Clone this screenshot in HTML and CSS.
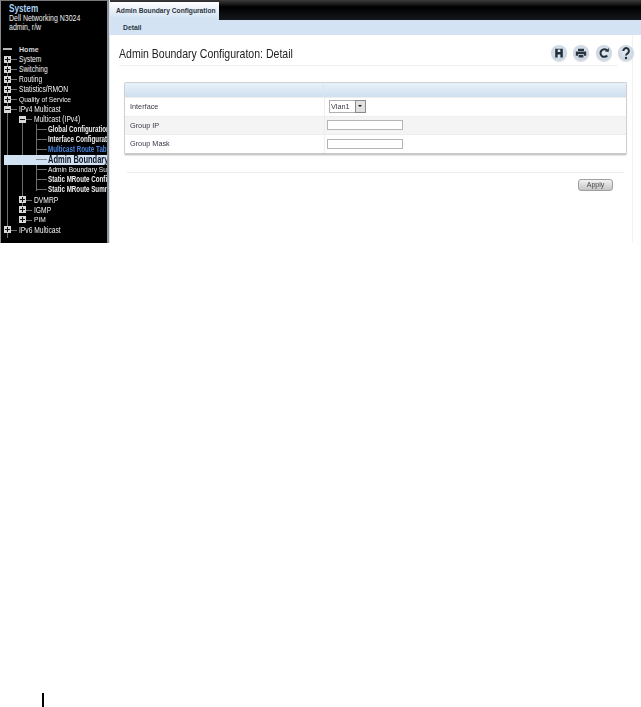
FILE: index.html
```html
<!DOCTYPE html>
<html lang="en">
<head>
<meta charset="utf-8">
<title>Admin Boundary Configuration</title>
<link rel="stylesheet" href="styles.css">
</head>
<body>
<div class="frame">
  <aside class="side">
    <div class="sys">
      <div class="sys-name">System</div>
      <div class="sys-line">Dell Networking N3024</div>
      <div class="sys-line">admin, r/w</div>
    </div>
    <div class="tree">
      <span class="vline v1"></span><span class="vline v2"></span><span class="vline v3"></span>
      <div class="row l0 home"><span class="dash"></span><span class="lbl">Home</span></div>
      <div class="row l0"><span class="box plus"></span><span class="lbl">System</span></div>
      <div class="row l0"><span class="box plus"></span><span class="lbl">Switching</span></div>
      <div class="row l0"><span class="box plus"></span><span class="lbl">Routing</span></div>
      <div class="row l0"><span class="box plus"></span><span class="lbl">Statistics/RMON</span></div>
      <div class="row l0 small"><span class="box plus"></span><span class="lbl">Quality of Service</span></div>
      <div class="row l0"><span class="box minus"></span><span class="lbl">IPv4 Multicast</span></div>
      <div class="row l1"><span class="box minus"></span><span class="lbl">Multicast (IPv4)</span></div>
      <div class="row l2 strong"><span class="tick"></span><span class="lbl">Global Configuration</span></div>
      <div class="row l2 strong"><span class="tick"></span><span class="lbl">Interface Configuration</span></div>
      <div class="row l2 strong link"><span class="tick"></span><span class="lbl">Multicast Route Table</span></div>
      <div class="row l2 active"><span class="tick"></span><span class="lbl">Admin Boundary Configuration</span></div>
      <div class="row l2 small"><span class="tick"></span><span class="lbl">Admin Boundary Summary</span></div>
      <div class="row l2 strong"><span class="tick"></span><span class="lbl">Static MRoute Configuration</span></div>
      <div class="row l2 strong"><span class="tick"></span><span class="lbl">Static MRoute Summary</span></div>
      <div class="row l1"><span class="box plus"></span><span class="lbl">DVMRP</span></div>
      <div class="row l1"><span class="box plus"></span><span class="lbl">IGMP</span></div>
      <div class="row l1 small"><span class="box plus"></span><span class="lbl">PIM</span></div>
      <div class="row l0"><span class="box plus"></span><span class="lbl">IPv6 Multicast</span></div>
    </div>
  </aside>
  <main class="main">
    <div class="tabbar"><div class="tab">Admin Boundary Configuration</div></div>
    <div class="subbar">Detail</div>
    <div class="body">
      <div class="titlebar">
        <h1>Admin Boundary Configuraton: Detail</h1>
        <div class="tools">
          <span class="tool">
            <svg viewBox="0 0 16 16" class="ico"><path d="M4.200 3.800h7.600v8.700H9.400V9.600H6.600v2.900H4.200zM6.700 4.500v2.600h2.600V4.500z" fill="#222f3c" fill-rule="evenodd"/></svg>
          </span>
          <span class="tool">
            <svg viewBox="0 0 16 16" class="ico"><path d="M5 3.800h6v2.200H5zM2.800 6.500h10.400v4.200h-2.200V9.300H5v1.400H2.800zM5.600 10h4.800v2.500H5.600z" fill="#2a3642"/></svg>
          </span>
          <span class="tool">
            <svg viewBox="0 0 16 16" class="ico"><path d="M11.200 10.500A3.800 3.800 0 1 1 11 5.400" fill="none" stroke="#222f3c" stroke-width="2"/><path d="M9 6.800h3.800V3z" fill="#222f3c"/></svg>
          </span>
          <span class="tool">
            <svg viewBox="0 0 16 16" class="ico"><path d="M5.300 6a2.800 2.800 0 1 1 4.300 2.300C8.500 9 8 9.500 8 10.600" fill="none" stroke="#222f3c" stroke-width="2"/><circle cx="8" cy="13" r="1.200" fill="#222f3c"/></svg>
          </span>
        </div>
      </div>
      <div class="panel">
        <div class="phead"><span class="c1"></span><span class="c2"></span></div>
        <div class="prow"><label class="c1">Interface</label><div class="c2 sel"><span class="sel-val">Vlan1</span><span class="sel-btn"></span></div></div>
        <div class="prow alt"><label class="c1">Group IP</label><div class="c2"><input class="inp" type="text"></div></div>
        <div class="prow"><label class="c1">Group Mask</label><div class="c2"><input class="inp" type="text"></div></div>
      </div>
      <div class="actions"><button class="apply" type="button">Apply</button></div>
    </div>
  </main>
</div>
<div class="pagemark"></div>
</body>
</html>
```
FILE: styles.css
```css
html, body { margin: 0; padding: 0; background: #fff; }
body { width: 641px; height: 707px; overflow: hidden; font-family: "Liberation Sans", Arial, sans-serif; }

.frame { display: flex; height: 243px; filter: blur(0.35px); }

.side { width: 109px; flex: none; background: #000; color: #e4e4e4; overflow: hidden; box-sizing: border-box; border-left: 1px solid #8a8a8a; border-top: 1px solid #777; border-right: 2px solid #8d9298; }
.sys { height: 43px; padding: 3px 0 0 8px; box-sizing: border-box; color: #f0f0f0; }
.sys-name, .sys-line { transform-origin: left center; white-space: nowrap; }
.sys-name { color: #a8d2f6; font-weight: bold; font-size: 10px; line-height: 10px; transform: scaleX(0.82); }
.sys-line { font-size: 8.500px; line-height: 9px; transform: scaleX(0.82); }

.tree { position: relative; height: 199px; }
.vline { position: absolute; width: 1px; background: #6e6e6e; }
.v1 { left: 6px; top: 14px; height: 180px; }
.v2 { left: 21px; top: 75px; height: 91px; }
.v3 { left: 35px; top: 80px; height: 67px; }

.row { position: relative; display: flex; align-items: center; height: 10.06px; white-space: nowrap; font-size: 8.600px; color: #f0f0f0; }
.row.small { font-size: 7.800px; }
.row.strong { font-weight: bold; font-size: 8.200px; }
.l0 { padding-left: 3px; }
.l1 { padding-left: 18px; }
.l2 { padding-left: 35px; }
.box { position: relative; flex: none; width: 7px; height: 7px; background: #d8d8d8; z-index: 1; }
.box::before { content: ""; position: absolute; left: 1px; right: 1px; top: 3px; height: 1px; background: #111; }
.plus::after { content: ""; position: absolute; top: 1px; bottom: 1px; left: 3px; width: 1px; background: #111; }
.dash { flex: none; width: 9px; height: 2px; margin-left: -1px; background: #b8b8b8; }
.lbl { display: inline-block; margin-left: 8px; transform: scaleX(0.78); transform-origin: left center; }
.l0::before, .l1::before { content: ""; position: absolute; top: 50%; width: 6px; height: 1px; background: #6e6e6e; }
.l0::before { left: 10px; }
.l1::before { left: 25px; }
.home::before { display: none; }
.home { color: #d8d8d8; }
.home .lbl { margin-left: 7px; font-weight: bold; font-size: 8px; transform: scaleX(0.88); }
.small .lbl { transform: scaleX(0.85); }
.strong .lbl { transform: scaleX(0.76); }
.tick { flex: none; width: 11px; height: 1px; background: #6e6e6e; }
.l2 .lbl { margin-left: 1px; }
.link { color: #4a86e0; font-weight: bold; }
.active { margin-left: 3px; padding-left: 32px; background: #d3e2f2; color: #101828; font-size: 10px; font-weight: bold; }
.active .lbl { transform: scaleX(0.75); }
.active .tick { background: #8a9098; }

.main { flex: 1; min-width: 0; display: flex; flex-direction: column; border-left: 1px solid #dfe5ec; }
.tabbar { height: 20px; box-sizing: border-box; padding-top: 2px; background: linear-gradient(#3c3c3c, #000 35%, #15181c); display: flex; }
.tab { width: 109px; background: linear-gradient(#fff, #cfe0f2); font-size: 6.700px; font-weight: bold; color: #2a3340; line-height: 18px; padding-left: 6px; box-sizing: border-box; white-space: nowrap; }
.subbar { height: 15px; background: #d3e3f4; font-size: 6.800px; font-weight: bold; color: #2d3a46; line-height: 16px; padding-left: 13px; }

.body { flex: 1; padding: 0 14px 0 9px; border-right: 1px solid #f0f2f4; margin-right: 8px; }
.titlebar { display: flex; justify-content: space-between; align-items: center; height: 31px; box-sizing: border-box; padding: 6px 0 0; border-bottom: 1px solid #f0f0f0; }
h1 { margin: 0; width: 171px; font-size: 13.500px; font-weight: normal; color: #222; white-space: nowrap; transform: scaleX(0.78); transform-origin: left center; }
.tools { display: flex; gap: 6.500px; margin-right: -16px; }
.tool { width: 16px; height: 16px; border-radius: 50%; background: radial-gradient(circle at 50% 45%, #dfe6ee 20%, #c8d4e0 70%, #eef2f6 100%); box-shadow: 0 1px 1px #ddd; display: flex; }
.ico { width: 16px; height: 16px; }

.panel { margin: 16px 0 0 5px; width: 503px; box-sizing: border-box; border: 1px solid #d0d0d0; border-bottom: 2px solid #c8c8c8; border-radius: 2px; box-shadow: 0 1px 1px #e4e4e4; }
.phead { display: flex; height: 14px; background: linear-gradient(#e8f1fa, #cfe0f0); }
.prow { display: flex; height: 18.500px; align-items: center; font-size: 7.300px; color: #3a3a4a; border-top: 1px solid #eee; box-sizing: border-box; }
.alt { background: #f4f4f4; }
.c1 { width: 199px; flex: none; padding-left: 5px; box-sizing: border-box; }
.phead .c1 { border-right: 1px solid #dbe6f0; }
.prow .c2 { border-left: 1px solid #eee; height: 100%; display: flex; align-items: center; padding-left: 2px; }
.inp { width: 74px; height: 8px; padding: 0; margin: 0; border: 1px solid #b4b4b4; background: #fff; box-sizing: content-box; }
.sel-val { width: 24px; height: 11px; line-height: 11px; border: 1px solid #b0b0b0; border-right: 0; padding-left: 1px; margin-left: 2px; }
.sel-btn { position: relative; width: 9px; height: 11px; border: 1px solid #8a8a8a; background: #e0e0e0; margin-left: 0; }
.sel-btn::after { content: ""; position: absolute; left: 2px; top: 4px; border: 2.500px solid transparent; border-top-color: #111; border-bottom: 0; }

.actions { margin: 17px 0 0 8px; width: 497px; border-top: 1px solid #ececec; padding-top: 6px; display: flex; justify-content: flex-end; box-sizing: border-box; padding-right: 11px; }
.apply { width: 35px; height: 12px; padding: 0; border: 1px solid #a0a0a0; border-radius: 3px; background: linear-gradient(#f2f2f2, #c4c4c4); font: 7px "Liberation Sans", Arial, sans-serif; color: #444; }

.pagemark { width: 2px; height: 14px; margin: 450px 0 0 42px; background: #000; }
```
